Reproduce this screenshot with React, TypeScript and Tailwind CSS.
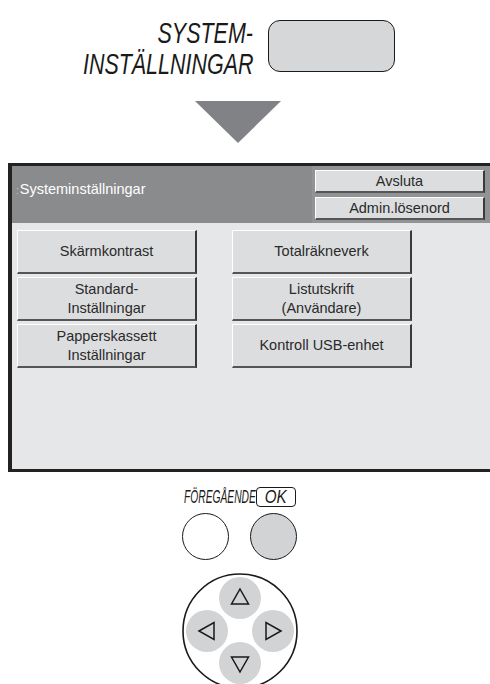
const btn =
  "flex items-center justify-center text-center leading-[19px] text-[14.5px] text-[#2a2a2a] bg-[#dcdddf] border-t border-l border-t-white border-l-white border-r-2 border-b-2 border-r-[#3a3a3a] border-b-[#555]";

function PanelButton({ children }: { children: React.ReactNode }) {
  return <div className={`${btn} w-[180px] h-[44px]`}>{children}</div>;
}

function DPad() {
  return (
    <svg width="120" height="122" viewBox="0 0 120 122" className="block">
      <circle cx="60" cy="60" r="57" fill="white" stroke="#1a1a1a" strokeWidth="1.6" />
      <circle cx="60" cy="27" r="21" fill="#d2d3d4" />
      <circle cx="27" cy="60" r="21" fill="#d2d3d4" />
      <circle cx="93" cy="60" r="21" fill="#d2d3d4" />
      <circle cx="60" cy="92" r="21" fill="#d2d3d4" />
      {/* up */}
      <path d="M60 18 L68.5 33 L51.5 33 Z" fill="none" stroke="#1a1a1a" strokeWidth="1.5" />
      {/* left */}
      <path d="M19 60 L34 51.5 L34 68.5 Z" fill="none" stroke="#1a1a1a" strokeWidth="1.5" />
      {/* right */}
      <path d="M101 60 L86 51.5 L86 68.5 Z" fill="none" stroke="#1a1a1a" strokeWidth="1.5" />
      {/* down */}
      <path d="M60 101 L68.5 86 L51.5 86 Z" fill="none" stroke="#1a1a1a" strokeWidth="1.5" />
    </svg>
  );
}

export default function App() {
  return (
    <div
      className="w-[490px] h-[684px] overflow-hidden bg-white"
      style={{ fontFamily: '"Liberation Sans", Arial, sans-serif' }}
    >
      {/* key label + arrow */}
      <div className="h-[163px] flex flex-col items-center">
        <div className="flex items-center pt-[18px] mr-[12px]">
          <div className="w-[170px] flex flex-col items-end text-[29px] leading-[31px] italic text-[#1a1a1a]">
            <span className="inline-block scale-x-[0.74] origin-right whitespace-nowrap">SYSTEM-</span>
            <span className="inline-block scale-x-[0.74] origin-right whitespace-nowrap">INSTÄLLNINGAR</span>
          </div>
          <div className="ml-[15px] mt-[-6px] w-[127px] h-[52px] rounded-[12px] border-[1.5px] border-[#1a1a1a] bg-[#d6d7d8]" />
        </div>
        <svg width="86" height="42" viewBox="0 0 86 42" className="mt-[21px] mr-[15px]">
          <path d="M0 0 L86 0 L43 42 Z" fill="#808285" />
        </svg>
      </div>

      {/* touch panel */}
      <div className="ml-[8px] w-[500px] h-[309px] flex flex-col border-l-4 border-t-[3px] border-b-[3px] border-[#222]">
        <div className="h-[57px] bg-[#8a8b8d] flex">
          <div className="w-[300px] pt-[14px] pl-[4px] text-[14.5px] leading-[18px] text-white">
            <span className="text-[#c9c9c9] text-[10px] mr-[1px]">:</span>Systeminställningar
          </div>
          <div className="flex flex-col gap-[4px] pt-[4px] pl-[3px] pr-[6px] bg-[#929395]">
            <div className={`${btn} w-[170px] h-[23px]`}>Avsluta</div>
            <div className={`${btn} w-[170px] h-[23px]`}>Admin.lösenord</div>
          </div>
        </div>
        <div className="flex-1 bg-[#e6e7e8] pt-[7px] pl-[5px] flex gap-[35px]">
          <div className="flex flex-col gap-[3px]">
            <PanelButton>Skärmkontrast</PanelButton>
            <PanelButton>
              Standard-
              <br />
              Inställningar
            </PanelButton>
            <PanelButton>
              Papperskassett
              <br />
              Inställningar
            </PanelButton>
          </div>
          <div className="flex flex-col gap-[3px]">
            <PanelButton>Totalräkneverk</PanelButton>
            <PanelButton>
              Listutskrift
              <br />
              (Användare)
            </PanelButton>
            <PanelButton>Kontroll USB-enhet</PanelButton>
          </div>
        </div>
      </div>

      {/* operation keys */}
      <div className="flex flex-col items-center pt-[14px] mr-[11px]">
        <div className="flex items-center h-[21px]">
          <span className="inline-block w-[71px] text-[19px] leading-[19px] italic text-[#1a1a1a]">
            <span className="inline-block scale-x-[0.54] origin-left whitespace-nowrap">FÖREGÅENDE</span>
          </span>
          <span className="ml-[1px] w-[40px] h-[20px] flex items-center justify-center rounded-[4px] border-[1.5px] border-[#1a1a1a] text-[19px] leading-[19px] italic text-[#1a1a1a]">
            <span className="inline-block scale-x-[0.8]">OK</span>
          </span>
        </div>
        <div className="flex gap-[21px] mt-[6px]">
          <div className="w-[47px] h-[47px] rounded-full border-[1.5px] border-[#1a1a1a] bg-white" />
          <div className="w-[47px] h-[47px] rounded-full border-[1.5px] border-[#1a1a1a] bg-[#d2d3d4]" />
        </div>
        <div className="mt-[11px]">
          <DPad />
        </div>
      </div>
    </div>
  );
}
